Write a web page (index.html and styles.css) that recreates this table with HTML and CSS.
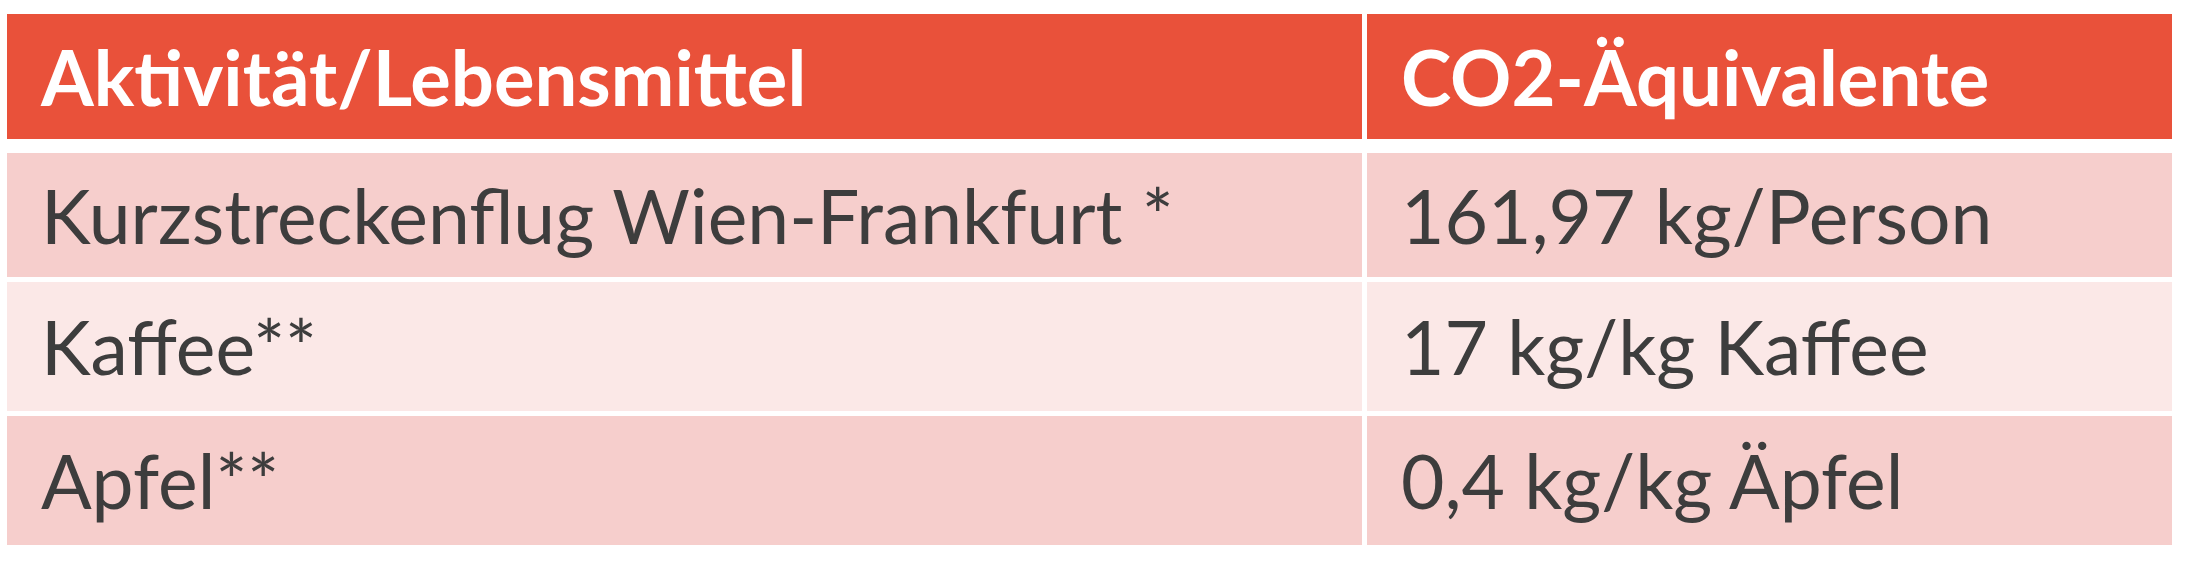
FILE: index.html
```html
<!DOCTYPE html>
<html lang="de">
<head>
<meta charset="utf-8">
<title>CO2-Äquivalente</title>
<link rel="stylesheet" href="styles.css">
</head>
<body>
<div class="table">
  <div class="row head">
    <div class="cell">Aktivität/Lebensmittel</div>
    <div class="cell">CO2-Äquivalente</div>
  </div>
  <div class="body">
    <div class="row r1 odd">
      <div class="cell">Kurzstreckenflug Wien-Frankfurt *</div>
      <div class="cell">161,97 kg/Person</div>
    </div>
    <div class="row r2 even">
      <div class="cell">Kaffee**</div>
      <div class="cell">17 kg/kg Kaffee</div>
    </div>
    <div class="row r3 odd">
      <div class="cell">Apfel**</div>
      <div class="cell">0,4 kg/kg Äpfel</div>
    </div>
  </div>
</div>
</body>
</html>
```

FILE: styles.css
```css
html, body {
  margin: 0;
  padding: 0;
  background: #ffffff;
}
body {
  width: 2190px;
  height: 586px;
  font-family: Lato, "Open Sans", sans-serif;
  color: #3d3d3d;
}
.table {
  padding: 14px 0 0 7px;
  width: 2165px;
}
.row {
  display: grid;
  grid-template-columns: 1355px 805px;
  column-gap: 5px;
}
.body {
  margin-top: 14px;
  display: flex;
  flex-direction: column;
  gap: 5px;
}
.cell {
  display: flex;
  align-items: center;
  padding-left: 34px;
  font-size: 75px;
  line-height: 1;
  white-space: nowrap;
}
.head .cell {
  background: #e9513a;
  color: #ffffff;
  font-weight: 700;
  font-size: 76px;
  height: 125px;
}
.odd .cell {
  background: #f6cecc;
}
.even .cell {
  background: #fbe8e7;
}
.r1 .cell {
  height: 124px;
}
.r2 .cell,
.r3 .cell {
  height: 129px;
}
```
